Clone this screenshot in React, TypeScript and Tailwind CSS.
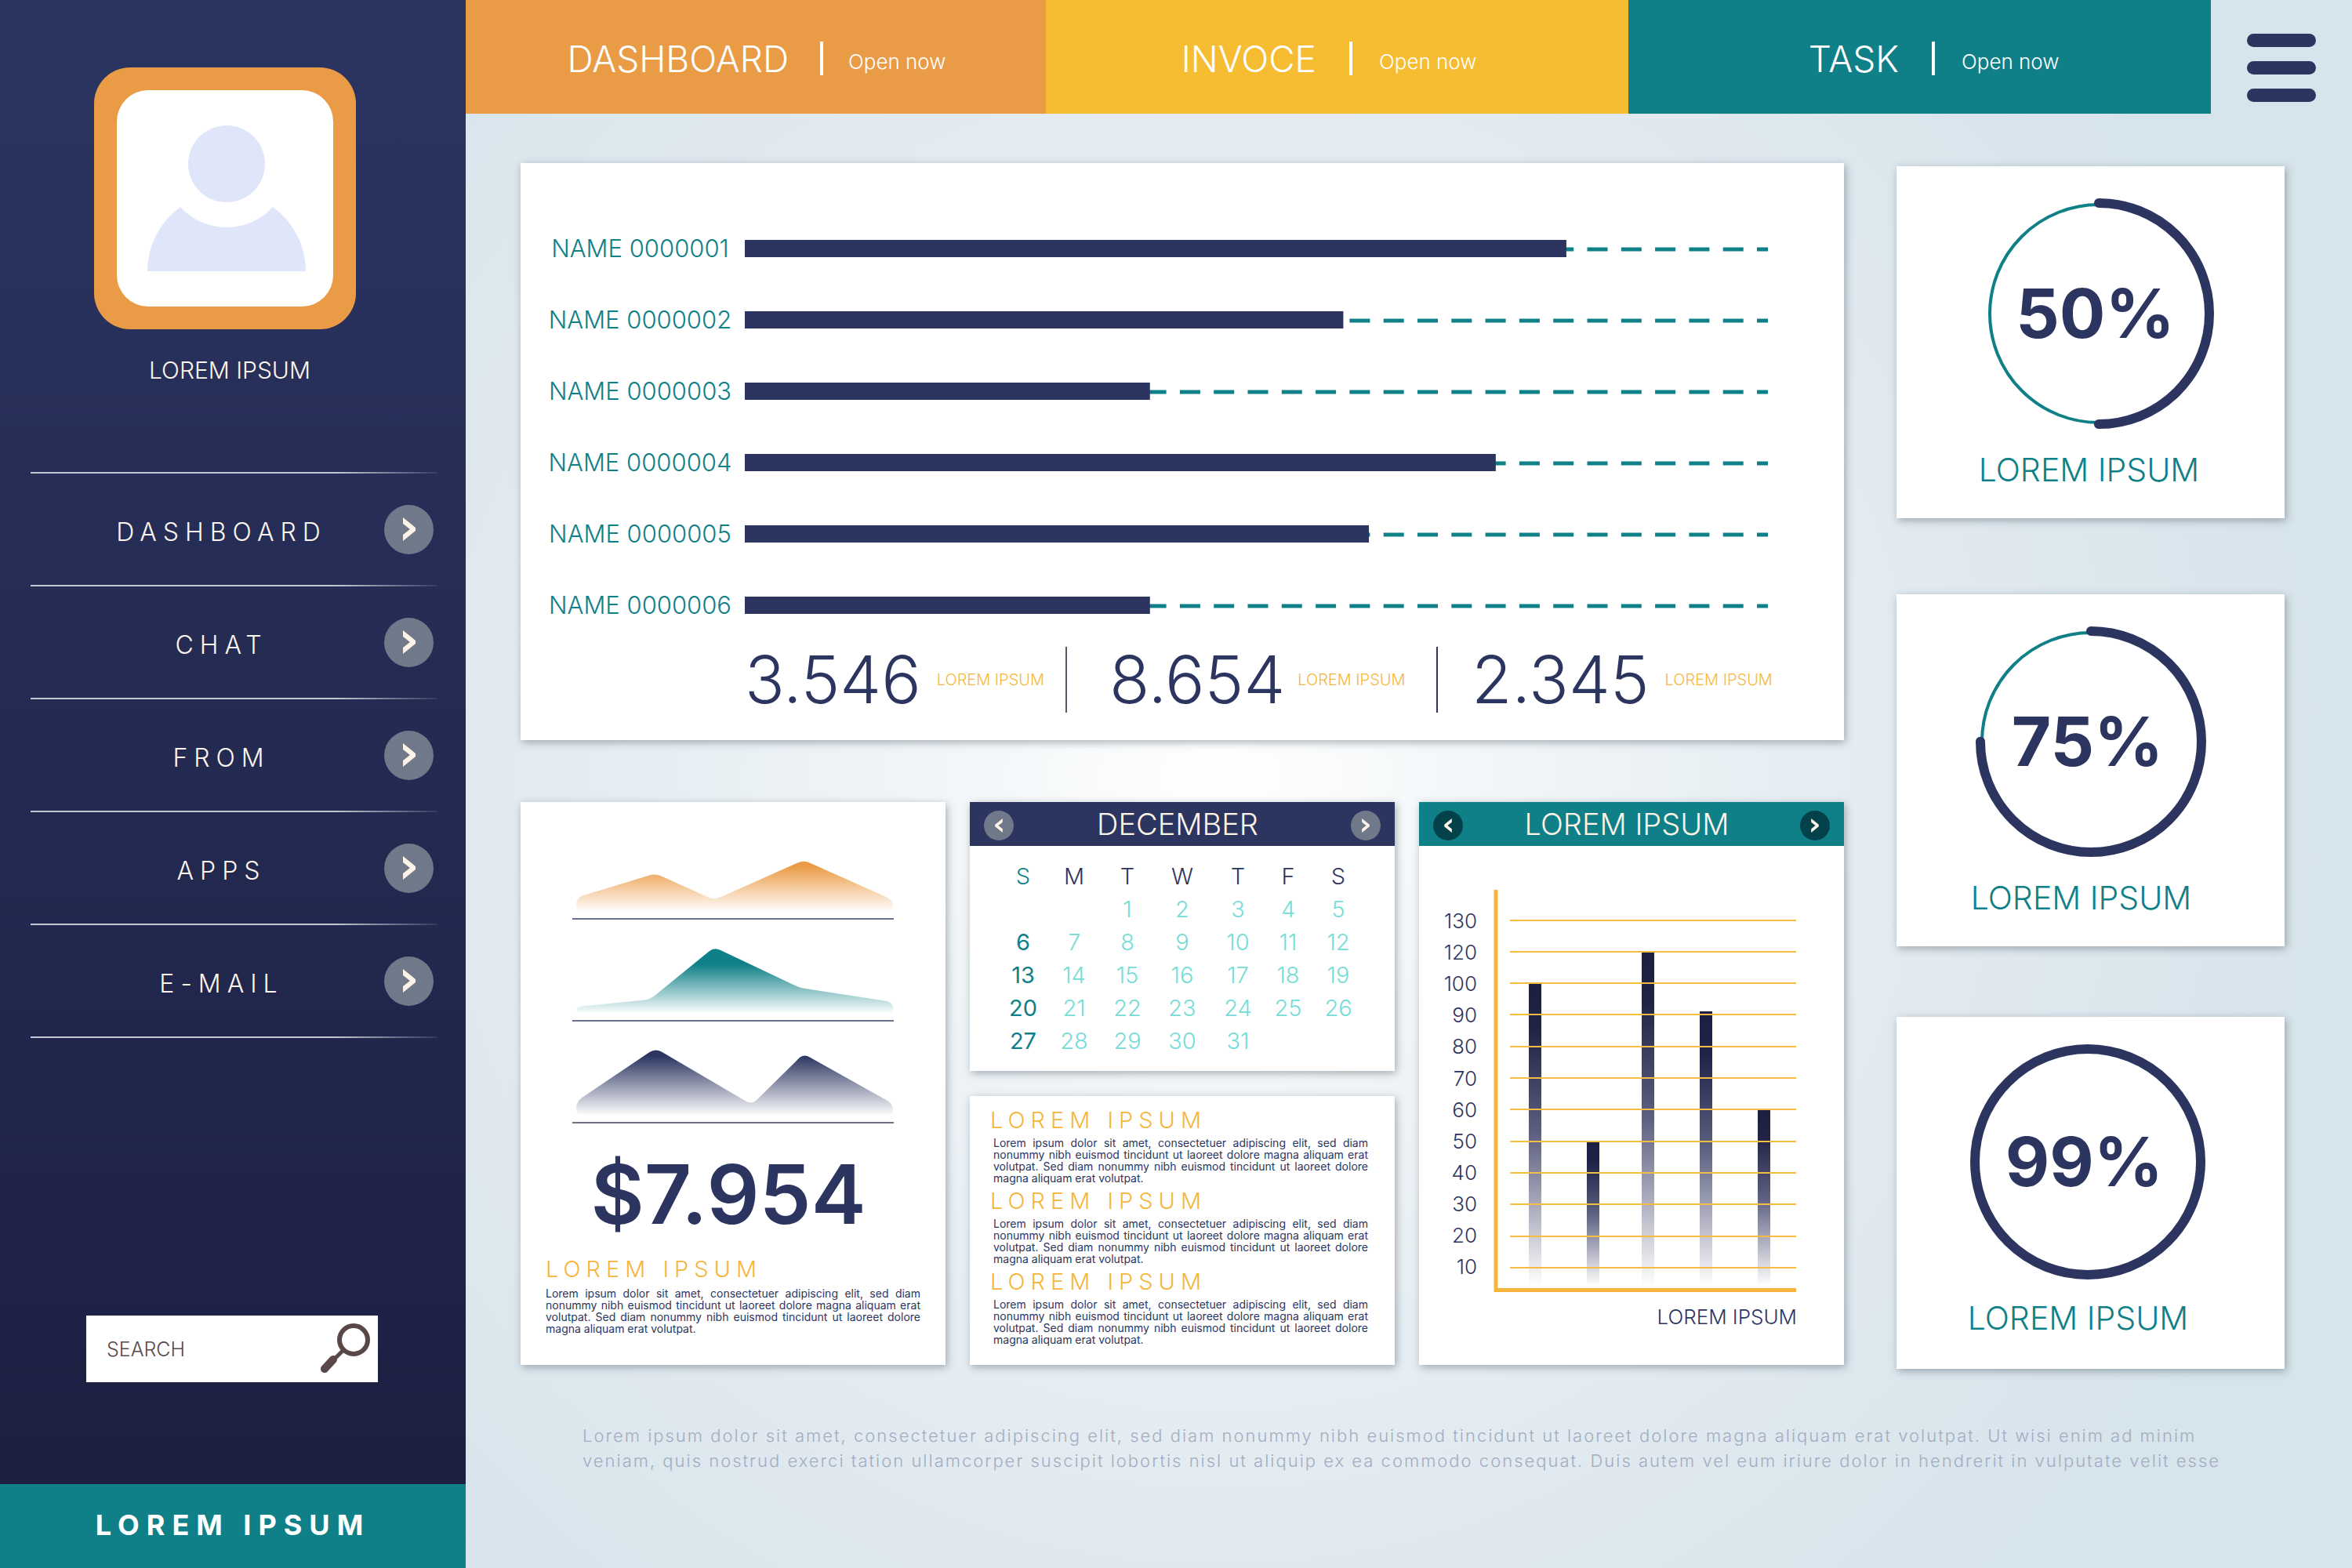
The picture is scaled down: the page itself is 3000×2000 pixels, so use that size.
import type { ReactNode } from "react";

const NAVY = "#2b3560";
const TEAL = "#108088";

const navItems = ["DASHBOARD", "CHAT", "FROM", "APPS", "E-MAIL"];

const bars = [
  { name: "NAME 0000001", value: 80.3 },
  { name: "NAME 0000002", value: 58.5 },
  { name: "NAME 0000003", value: 39.6 },
  { name: "NAME 0000004", value: 73.4 },
  { name: "NAME 0000005", value: 61 },
  { name: "NAME 0000006", value: 39.6 },
];

const areas: { id: string; color: string; top: number; points: [number, number][] }[] = [
  {
    id: "area-orange",
    color: "#ea9b46",
    top: 25,
    points: [[5, 72], [106, 41], [181, 75], [295, 24], [409, 75], [409, 90], [5, 90]],
  },
  {
    id: "area-teal",
    color: TEAL,
    top: 20,
    points: [[5, 81], [99, 72], [181, 5], [290, 57], [409, 75], [409, 91], [5, 91]],
  },
  {
    id: "area-navy",
    color: NAVY,
    top: 5,
    points: [[5, 72], [106, 4], [229, 76], [295, 11], [409, 75], [409, 91], [5, 91]],
  },
];

const weekDays = ["S", "M", "T", "W", "T", "F", "S"];
const weeks = [
  ["", "", "1", "2", "3", "4", "5"],
  ["6", "7", "8", "9", "10", "11", "12"],
  ["13", "14", "15", "16", "17", "18", "19"],
  ["20", "21", "22", "23", "24", "25", "26"],
  ["27", "28", "29", "30", "31", "", ""],
];

const ticks = ["130", "120", "100", "90", "80", "70", "60", "50", "40", "30", "20", "10"];
const columns = [
  { x: 70, top: 119 },
  { x: 144, top: 321 },
  { x: 214, top: 79 },
  { x: 288, top: 155 },
  { x: 362, top: 281 },
];

/* Builds a closed path whose corners are rounded by up to r units. */
function roundedPath(points: [number, number][], r: number) {
  const n = points.length;
  let d = "";
  for (let i = 0; i < n; i++) {
    const [x, y] = points[i];
    const [px, py] = points[(i + n - 1) % n];
    const [nx, ny] = points[(i + 1) % n];
    const lp = Math.hypot(px - x, py - y);
    const ln = Math.hypot(nx - x, ny - y);
    const a = Math.min(r, lp / 2);
    const b = Math.min(r, ln / 2);
    const sx = x + ((px - x) * a) / lp;
    const sy = y + ((py - y) * a) / lp;
    const ex = x + ((nx - x) * b) / ln;
    const ey = y + ((ny - y) * b) / ln;
    d += `${i === 0 ? "M" : "L"}${sx} ${sy}Q${x} ${y} ${ex} ${ey}`;
  }
  return d + "Z";
}

function Chevron({ left = false, className }: { left?: boolean; className: string }) {
  return (
    <svg viewBox="0 0 16 30" className={className} aria-hidden="true">
      <path
        d={left ? "M16 0V8L7 15L16 22V30L0 17V13Z" : "M0 0V8L9 15L0 22V30L16 17V13Z"}
        fill="#fdf3e7"
      />
    </svg>
  );
}

function Sidebar() {
  return (
    <aside className="flex w-[594px] shrink-0 flex-col bg-linear-to-b from-[#2b3562] via-[#232a51] to-[#1c1e40] text-[#fdf6ec]">
      <div className="mt-[86px] mr-5 flex flex-col items-center">
        <div className="flex size-[334px] items-center justify-center rounded-[46px] bg-[#ea9b46]">
          <div className="flex size-[276px] items-center justify-center rounded-[40px] bg-white">
            <svg viewBox="0 0 276 276" className="size-full" role="img" aria-label="User avatar">
              <circle cx="140" cy="94" r="49" fill="#e0e6f9" />
              <path d="M39 231A101 101 0 0 1 81 149A80 80 0 0 0 199 149A101 101 0 0 1 241 231Z" fill="#e0e6f9" />
            </svg>
          </div>
        </div>
        <p className="mt-8 ml-3 text-[30px] leading-10">LOREM IPSUM</p>
      </div>

      <nav className="mt-[110px] ml-[39px] mr-9">
        <Divider />
        <ul>
          {navItems.map((item) => (
            <li key={item}>
              <a href="#" className="flex h-[142px] items-center pr-[5px]">
                <span className="flex-1 pt-2 pl-9 text-center text-[32px] leading-10 tracking-[8px]">{item}</span>
                <span className="flex size-[63px] items-center justify-center rounded-full bg-[#6f798a]">
                  <Chevron className="h-[30px] w-4" />
                </span>
              </a>
              <Divider />
            </li>
          ))}
        </ul>
      </nav>

      <form className="mt-auto mb-[130px] ml-[110px] flex h-[85px] w-[372px] items-center bg-white pr-2 pl-[26px] text-[#5a4848]">
        <input
          type="text"
          aria-label="Search"
          placeholder="SEARCH"
          className="min-w-0 flex-1 text-[25px] leading-8 outline-none placeholder:text-[#5a4848] placeholder:opacity-100"
        />
        <button type="submit" aria-label="Submit search" className="shrink-0">
          <svg viewBox="0 0 66 66" className="size-[66px]" aria-hidden="true">
            <circle cx="43" cy="21" r="18" fill="none" stroke="#5a4848" strokeWidth="6" />
            <path d="M31 33L18 46" stroke="#5a4848" strokeWidth="5" />
            <path d="M17 46L6 58" stroke="#5a4848" strokeWidth="10" strokeLinecap="round" />
          </svg>
        </button>
      </form>

      <div className="flex h-[107px] items-center justify-center bg-[#108088] pb-1 text-[36px] font-bold tracking-[9px] text-white">
        LOREM IPSUM
      </div>
    </aside>
  );
}

function Divider() {
  return <div className="h-0.5 bg-linear-to-r from-[#c4c7d3] from-75% to-[#c4c7d3]/10" />;
}

function Tab({ title, className }: { title: string; className: string }) {
  return (
    <a href="#" className={`flex h-[145px] items-center justify-end pt-1 text-white ${className}`}>
      <span className="text-[46px] leading-[52px]">{title}</span>
      <span className="h-[43px] w-1 bg-white" />
      <span className="-ml-2 w-[125px] pt-2 text-[26px] leading-8 whitespace-nowrap">Open now</span>
    </a>
  );
}

function Header() {
  return (
    <header className="flex">
      <div className="grid flex-1 grid-cols-[740fr_743fr_743fr]">
        <Tab title="DASHBOARD" className="gap-10 bg-[#ea9b46] pr-[127px]" />
        <Tab title="INVOCE" className="gap-[42px] bg-[#f6bc32] pr-[193px]" />
        <Tab title="TASK" className="gap-[42px] bg-[#108088] pr-[193px]" />
      </div>
      <div className="flex w-[180px] items-start justify-center pt-[43px]">
        <button type="button" aria-label="Open menu" className="flex w-[88px] flex-col gap-[18px]">
          <span className="h-[17px] rounded-full bg-[#2b3560]" />
          <span className="h-[17px] rounded-full bg-[#2b3560]" />
          <span className="h-[17px] rounded-full bg-[#2b3560]" />
        </button>
      </div>
    </header>
  );
}

function Card({ className = "", children }: { className?: string; children: ReactNode }) {
  return <section className={`bg-white shadow-[2px_3px_10px_rgba(70,85,95,0.45)] ${className}`}>{children}</section>;
}

function Stat({ value, className }: { value: string; className: string }) {
  return (
    <div className={`flex items-center ${className}`}>
      <span className="text-[84px] leading-[84px] text-[#2b3560]">{value}</span>
      <span className="text-[20px] leading-6 whitespace-nowrap text-[#f6b83a]">LOREM IPSUM</span>
    </div>
  );
}

function BarsCard() {
  return (
    <Card className="h-[736px] pt-[63px] pr-[97px] pl-[21px]">
      <ul>
        {bars.map((bar) => (
          <li key={bar.name} className="flex h-[91px] items-center">
            <span className="w-[265px] pr-[2px] text-center text-[31px] leading-9 text-[#108088]">{bar.name}</span>
            <svg className="h-[22px] flex-1" role="img" aria-label={`${bar.name}: ${bar.value}%`}>
              <line x1="0" x2="100%" y1="12" y2="12" stroke={TEAL} strokeWidth="5" strokeDasharray="26 17.3" strokeDashoffset="8" />
              <rect width={`${bar.value}%`} height="22" fill={NAVY} />
            </svg>
          </li>
        ))}
      </ul>
      <div className="mt-2 ml-[265px] flex items-center">
        <Stat value="3.546" className="w-[409px] shrink-0 gap-5" />
        <span className="h-[84px] w-0.5 shrink-0 bg-[#555a66]" />
        <Stat value="8.654" className="w-[471px] shrink-0 gap-4 pl-[54px]" />
        <span className="h-[84px] w-0.5 shrink-0 bg-[#2b3560]" />
        <Stat value="2.345" className="gap-5 pl-[43px]" />
      </div>
    </Card>
  );
}

function Blurb() {
  return (
    <p className="text-[14px] leading-[15px] font-normal text-[#2b3560]">
      <span className="block [text-align-last:justify]">
        Lorem ipsum dolor sit amet, consectetuer adipiscing elit, sed diam
      </span>
      <span className="block [text-align-last:justify]">
        nonummy nibh euismod tincidunt ut laoreet dolore magna aliquam erat
      </span>
      <span className="block [text-align-last:justify]">
        volutpat. Sed diam nonummy nibh euismod tincidunt ut laoreet dolore
      </span>
      <span className="block">magna aliquam erat volutpat.</span>
    </p>
  );
}

function BlurbTitle() {
  return <h3 className="text-[29px] leading-[30px] tracking-[7px] text-[#f6b53a]">LOREM IPSUM</h3>;
}

function AreasCard() {
  return (
    <Card className="pt-[50px] pr-8 pl-8">
      <div className="flex flex-col items-center gap-[29px]">
        {areas.map((area) => (
          <svg key={area.id} viewBox="0 0 410 101" className="h-[101px] w-[410px]" role="img" aria-label="Area chart">
            <defs>
              <linearGradient id={area.id} gradientUnits="userSpaceOnUse" x1="0" x2="0" y1={area.top} y2="90">
                <stop offset="0.1" stopColor={area.color} />
                <stop offset="1" stopColor={area.color} stopOpacity="0" />
              </linearGradient>
            </defs>
            <path d={roundedPath(area.points, 9)} fill={`url(#${area.id})`} />
            <line x1="0" x2="410" y1="99" y2="99" stroke="#6b7290" strokeWidth="2" />
          </svg>
        ))}
      </div>
      <p className="mt-[34px] mr-3 text-center text-[105px] leading-[110px] font-semibold text-[#2b3560]">$7.954</p>
      <div className="mt-[26px]">
        <BlurbTitle />
        <div className="mt-2">
          <Blurb />
        </div>
      </div>
    </Card>
  );
}

function PanelHeader({ title, color, button }: { title: string; color: string; button: string }) {
  return (
    <div className={`flex h-14 items-center justify-between px-[18px] ${color}`}>
      <button type="button" aria-label="Previous" className={`mt-1 flex size-[38px] items-center justify-center rounded-full ${button}`}>
        <Chevron left className="h-[18px] w-[10px]" />
      </button>
      <h2 className="mr-3 text-[38px] leading-10 text-[#fdf3e7]">{title}</h2>
      <button type="button" aria-label="Next" className={`mt-1 flex size-[38px] items-center justify-center rounded-full ${button}`}>
        <Chevron className="h-[18px] w-[10px]" />
      </button>
    </div>
  );
}

function CalendarCard() {
  return (
    <Card className="h-[343px]">
      <PanelHeader title="DECEMBER" color="bg-[#2b3560]" button="bg-[#6f798a]" />
      <table className="mx-auto mt-[18px] w-[470px] table-fixed text-center text-[29px] leading-[42px] text-[#75dcd6]">
        <colgroup>
          <col className="w-16" />
          <col className="w-[66px]" />
          <col className="w-[70px]" />
          <col className="w-[70px]" />
          <col className="w-[72px]" />
          <col className="w-14" />
          <col className="w-[72px]" />
        </colgroup>
        <thead>
          <tr className="text-[#2b3560]">
            {weekDays.map((day, i) => (
              <th key={i} scope="col" className="p-0 font-light first:text-[#108088]">
                {day}
              </th>
            ))}
          </tr>
        </thead>
        <tbody>
          {weeks.map((week, i) => (
            <tr key={i}>
              {week.map((day, j) => (
                <td key={j} className="p-0 first:font-normal first:text-[#108088]">
                  {day}
                </td>
              ))}
            </tr>
          ))}
        </tbody>
      </table>
    </Card>
  );
}

function NotesCard() {
  return (
    <Card className="flex h-[343px] flex-col gap-[7px] pt-4 pr-[34px] pl-[26px]">
      {[0, 1, 2].map((i) => (
        <div key={i}>
          <BlurbTitle />
          <div className="mt-[6px] pl-1">
            <Blurb />
          </div>
        </div>
      ))}
    </Card>
  );
}

function ColumnsCard() {
  return (
    <Card>
      <PanelHeader title="LOREM IPSUM" color="bg-[#108088]" button="bg-[#04424b]" />
      <div className="mt-14 ml-[22px] w-[460px]">
        <svg viewBox="-48 0 460 513" className="h-[513px] w-[460px]" role="img" aria-label="Column chart">
          <defs>
            <linearGradient id="column" x1="0" x2="0" y1="0" y2="1">
              <stop offset="0" stopColor="#1c1f42" />
              <stop offset="0.15" stopColor="#1f2346" />
              <stop offset="0.5" stopColor="#5d6080" />
              <stop offset="1" stopColor="#ffffff" />
            </linearGradient>
          </defs>
          {columns.map((c) => (
            <rect key={c.x} x={c.x} y={c.top} width="16" height={505 - c.top} fill="url(#column)" />
          ))}
          {ticks.map((tick, i) => (
            <g key={tick}>
              <text x="4" y={Math.round(49 + i * 40.1)} textAnchor="end" fontSize="26" fill={NAVY}>
                {tick}
              </text>
              <rect x="46" y={Math.round(37.5 + i * 40.3)} width="365" height="2" fill="#f6bc42" />
            </g>
          ))}
          <path d="M28 0V510.500H411" fill="none" stroke="#f6b53a" strokeWidth="5" />
        </svg>
        <p className="mt-4 text-right text-[26px] leading-8 text-[#2b3560]">LOREM IPSUM</p>
      </div>
    </Card>
  );
}

function RingCard({ percent, radius, className }: { percent: number; radius: number; className: string }) {
  const length = 2 * Math.PI * radius;
  const share = percent === 99 ? 1 : percent / 100;
  return (
    <Card className={`h-[449px] ${className}`}>
      <div className="relative mx-auto size-[306px]">
        <svg viewBox="0 0 306 306" className="size-full" aria-hidden="true">
          <circle cx="153" cy="153" r={radius - 2} fill="none" stroke={TEAL} strokeWidth="4" />
          <circle
            cx="153"
            cy="153"
            r={radius}
            fill="none"
            stroke={NAVY}
            strokeWidth="12"
            strokeLinecap="round"
            strokeDasharray={`${length * share} ${length}`}
            transform="rotate(-90 153 153)"
          />
        </svg>
        <p className="absolute inset-0 flex items-center justify-center pr-2 text-[87px] font-bold text-[#2b3560]">
          {percent}%
        </p>
      </div>
      <p className="mt-[22px] pr-6 text-center text-[41px] leading-12 text-[#108088]">LOREM IPSUM</p>
    </Card>
  );
}

export default function App() {
  return (
    <div className="flex min-h-screen font-['Inter','Liberation_Sans',sans-serif] font-light">
      <Sidebar />
      <div className="flex min-w-0 flex-1 flex-col bg-[radial-gradient(circle_1450px_at_40%_50%,#ffffff_0%,#eef3f6_32%,#e6eef3_52%,#dfe8ef_72%,#d6e4eb_100%)]">
        <Header />
        <main className="flex pt-[63px] pr-[86px] pl-[70px]">
          <div className="min-w-0 flex-1">
            <BarsCard />
            <div className="mt-[79px] grid grid-cols-3 gap-[31px]">
              <AreasCard />
              <div className="flex flex-col gap-8">
                <CalendarCard />
                <NotesCard />
              </div>
              <ColumnsCard />
            </div>
          </div>
          <div className="mt-1 ml-[67px] w-[495px]">
            <RingCard percent={50} radius={141} className="pt-[35px] pl-5" />
            <RingCard percent={75} radius={141} className="mt-[97px] pt-[35px]" />
            <RingCard percent={99} radius={144} className="mt-[90px] pt-8 pr-2" />
          </div>
        </main>
        <p className="mt-[69px] pl-[149px] text-[22px] leading-8 tracking-[2px] whitespace-nowrap text-[#a3acc2]">
          Lorem ipsum dolor sit amet, consectetuer adipiscing elit, sed diam nonummy nibh euismod tincidunt ut laoreet dolore magna aliquam erat volutpat. Ut wisi enim ad minim
          <br />
          veniam, quis nostrud exerci tation ullamcorper suscipit lobortis nisl ut aliquip ex ea commodo consequat. Duis autem vel eum iriure dolor in hendrerit in vulputate velit esse
        </p>
      </div>
    </div>
  );
}
